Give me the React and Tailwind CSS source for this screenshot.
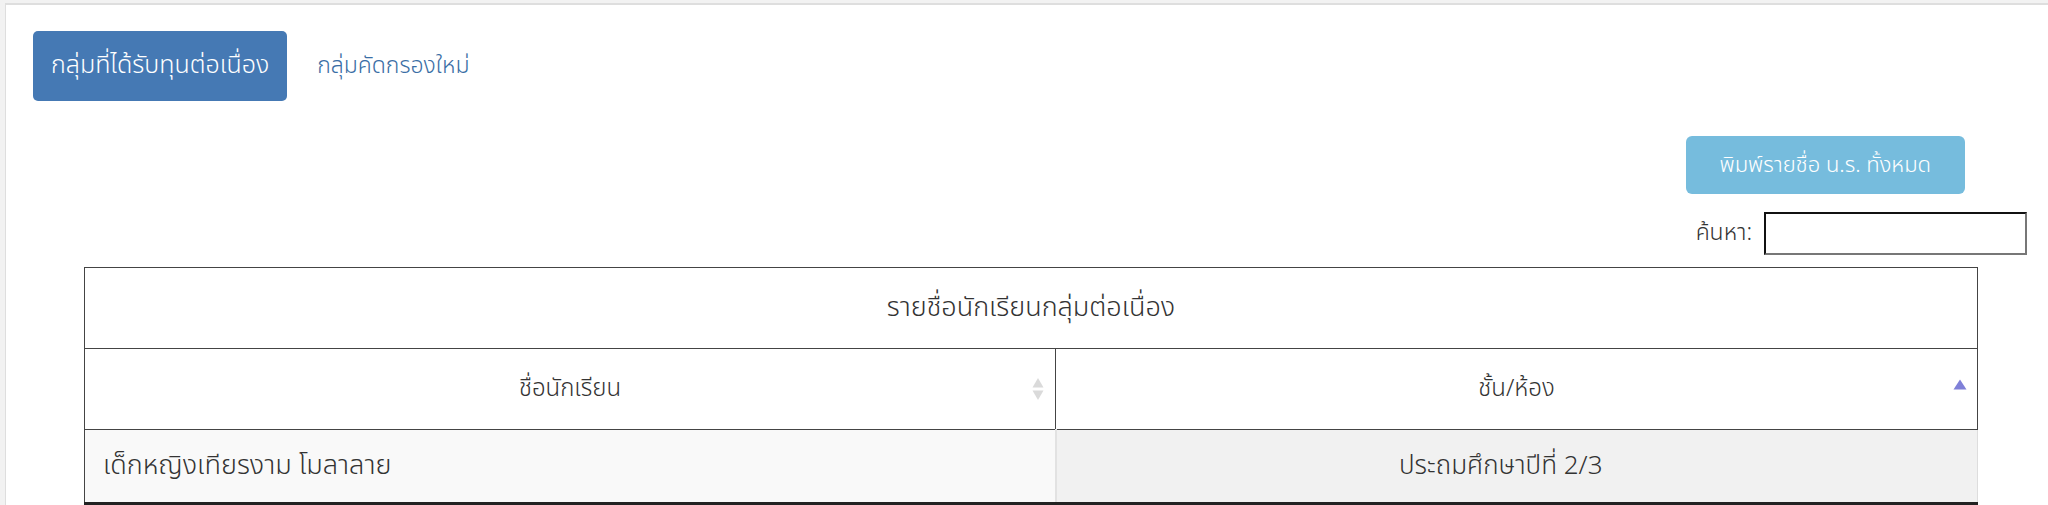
import React from "react";

const thai = { fontFamily: '"Noto Sans Thai", "Noto Sans", "Liberation Sans", sans-serif' };

function SortBoth() {
  return (
    <svg width="12" height="24" viewBox="0 0 12 24" className="absolute right-[11px] top-1/2 -translate-y-1/2">
      <path d="M6 1 L11.5 10.5 L0.5 10.5 Z" fill="#dadada" />
      <path d="M6 23 L11.5 13.5 L0.5 13.5 Z" fill="#dadada" />
    </svg>
  );
}

function SortAsc() {
  return (
    <svg width="14" height="11" viewBox="0 0 14 11" className="absolute right-[10px] top-[30px]">
      <path d="M7 0.5 L13.5 10.5 L0.5 10.5 Z" fill="#7f80d8" />
    </svg>
  );
}

export default function App() {
  return (
    <div className="w-[2048px] h-[505px] overflow-hidden bg-[#f2f2f2] pt-[3px] pl-[5px] text-[#333] font-light" style={thai}>
      <div className="h-full border-t-2 border-l border-[#dedede] bg-white pl-[27px] pt-[26px] pr-[21px]">
        {/* tabs */}
        <div className="flex items-center gap-[30px]">
          <button className="h-[70px] rounded-[5px] bg-[#4579b4] px-[18px] text-[25px] font-light text-white">
            กลุ่มที่ได้รับทุนต่อเนื่อง
          </button>
          <a href="#" className="text-[23px] text-[#3a6ea5]">
            กลุ่มคัดกรองใหม่
          </a>
        </div>

        {/* print */}
        <div className="mt-[35px] flex justify-end pr-[62px]">
          <button className="h-[58px] rounded-[6px] bg-[#76bcdd] px-[34px] text-[22px] font-light text-white">
            พิมพ์รายชื่อ น.ร. ทั้งหมด
          </button>
        </div>

        {/* search */}
        <div className="mt-[18px] flex items-center justify-end gap-[12px]">
          <span className="text-[23px]">ค้นหา:</span>
          <input className="h-[43px] w-[263px] border-2 border-t-[#111] border-l-[#111] border-r-[#777] border-b-[#777] bg-white outline-none" />
        </div>

        {/* table */}
        <div className="mt-[12px] pl-[51px] pr-[50px]">
          <table className="w-[1894px] border-collapse">
            <thead>
              <tr>
                <th colSpan={2} className="h-[81px] border border-[#444] text-[27px] font-light">
                  รายชื่อนักเรียนกลุ่มต่อเนื่อง
                </th>
              </tr>
              <tr>
                <th className="relative h-[81px] w-[971px] border border-[#444] text-[24px] font-light">
                  ชื่อนักเรียน
                  <SortBoth />
                </th>
                <th className="relative h-[81px] border border-[#444] text-[24px] font-light">
                  ชั้น/ห้อง
                  <SortAsc />
                </th>
              </tr>
            </thead>
            <tbody>
              <tr className="border-b-[3px] border-[#222]">
                <td className="h-[74px] border-l border-[#444] bg-[#f9f9f9] pl-[18px] text-[27px]">
                  เด็กหญิงเทียรงาม โมลาลาย
                </td>
                <td className="h-[74px] border-l-2 border-r border-l-[#e2e2e2] border-r-[#ddd] bg-[#f1f1f1] pr-[32px] text-center text-[26px]">
                  ประถมศึกษาปีที่ 2/3
                </td>
              </tr>
            </tbody>
          </table>
        </div>
      </div>
    </div>
  );
}
